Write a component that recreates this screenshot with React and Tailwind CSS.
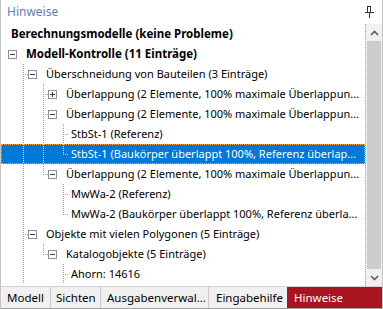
import React from "react";

const TEXT_X = { 0: 10, 1: 25, 2: 45, 3: 65, 4: 70 };

const UL = "Überlappung (2 Elemente, 100% maximale Überlappun...";

const rows = [
  { lv: 0, t: "Berechnungsmodelle (keine Probleme)", b: true, g: [] },
  { lv: 1, exp: "-", t: "Modell-Kontrolle (11 Einträge)", b: true, g: [] },
  { lv: 2, exp: "-", t: "Überschneidung von Bauteilen (3 Einträge)", g: ["T"] },
  { lv: 3, exp: "+", t: UL, g: ["I", "T"] },
  { lv: 3, exp: "-", t: UL, g: ["I", "T"] },
  { lv: 4, t: "StbSt-1 (Referenz)", g: ["I", "I", "T"] },
  { lv: 4, t: "StbSt-1 (Baukörper überlappt 100%, Referenz überlap...", g: ["I", "I", "L"], sel: true },
  { lv: 3, exp: "-", t: UL, g: ["I", "L"] },
  { lv: 4, t: "MwWa-2 (Referenz)", g: ["I", " ", "T"] },
  { lv: 4, t: "MwWa-2 (Baukörper überlappt 100%, Referenz überla...", g: ["I", " ", "L"] },
  { lv: 2, exp: "-", t: "Objekte mit vielen Polygonen (5 Einträge)", g: ["T"] },
  { lv: 3, exp: "-", t: "Katalogobjekte (5 Einträge)", g: ["I", "L"] },
  { lv: 4, t: "Ahorn: 14616", g: ["I", " ", "T"] },
];

function Guides({ row }) {
  const w = TEXT_X[row.lv];
  const dot = row.sel ? "#ffffff" : "#a0a0a0";
  const els = [];
  row.g.forEach((kind, i) => {
    const x = 22 + 20 * i + 0.5;
    if (kind === "I" || kind === "T") {
      els.push(<line key={"v" + i} x1={x} y1={0} x2={x} y2={20} stroke={dot} strokeDasharray="1 1" />);
    } else if (kind === "L") {
      els.push(<line key={"v" + i} x1={x} y1={0} x2={x} y2={11} stroke={dot} strokeDasharray="1 1" />);
    }
    if (i === row.g.length - 1 && kind !== " ") {
      const end = row.exp ? 22 + 20 * i + 5 : w - 2;
      els.push(<line key={"h" + i} x1={x - 0.5} y1={10.5} x2={end} y2={10.5} stroke={dot} strokeDasharray="1 1" />);
    }
  });
  if (row.exp) {
    const bx = row.lv === 1 ? 7 : 22 + 20 * (row.lv - 2) + 5;
    els.push(
      <rect key="box" x={bx + 0.5} y={6.5} width={8} height={8} fill="#ffffff" stroke="#919191" />
    );
    els.push(<line key="m" x1={bx + 2} y1={10.5} x2={bx + 7} y2={10.5} stroke="#3c3c3c" />);
    if (row.exp === "+") {
      els.push(<line key="p" x1={bx + 4.5} y1={8} x2={bx + 4.5} y2={13} stroke="#3c3c3c" />);
    }
  }
  return (
    <svg width={w} height={20} className="shrink-0 block" shapeRendering="crispEdges">
      {els}
    </svg>
  );
}

function Row({ row }) {
  return (
    <div
      className={
        "flex items-center h-[20px] whitespace-nowrap overflow-hidden " +
        (row.sel ? "bg-[#0078d7] text-white outline outline-1 outline-dotted outline-[#f5a442] -outline-offset-1" : "text-black")
      }
    >
      <Guides row={row} />
      <span className={"leading-[20px] " + (row.b ? "font-bold text-[11.5px]" : "text-[11px]")}>{row.t}</span>
    </div>
  );
}

export default function App() {
  return (
    <div
      className="w-[383px] h-[309px] bg-white flex flex-col border-l border-r border-[#c4c4c4] text-[11px] overflow-hidden"
      style={{ fontFamily: '"Noto Sans", "Open Sans", sans-serif' }}
    >
      {/* title */}
      <div className="h-[24px] flex items-center justify-between pl-[6px] pr-[8px] shrink-0">
        <span className="text-[12px] text-[#6080b4] leading-none">Hinweise</span>
        <svg width="9" height="12" viewBox="0 0 9 12" shapeRendering="crispEdges">
          <rect x="2.5" y="0.5" width="3" height="6" fill="none" stroke="#333" />
          <line x1="0" y1="6.5" x2="9" y2="6.5" stroke="#333" />
          <line x1="4.5" y1="7" x2="4.5" y2="12" stroke="#333" />
        </svg>
      </div>
      {/* body */}
      <div className="flex h-[262px] shrink-0">
        <div className="flex-1 flex flex-col overflow-hidden">
          {rows.map((r, i) => (
            <Row key={i} row={r} />
          ))}
        </div>
        <div className="w-[17px] shrink-0 border-l border-dotted border-[#a0a0a0] bg-[#f0f0f0] flex flex-col">
          <div className="h-[17px] flex items-center justify-center">
            <svg width="9" height="6" viewBox="0 0 9 6">
              <path d="M1 5 L4.5 1.5 L8 5" fill="none" stroke="#606060" strokeWidth="1.6" />
            </svg>
          </div>
          <div className="flex-1 bg-[#cdcdcd] mx-[1px]" />
          <div className="h-[17px] flex items-center justify-center">
            <svg width="9" height="6" viewBox="0 0 9 6">
              <path d="M1 1 L4.5 4.5 L8 1" fill="none" stroke="#606060" strokeWidth="1.6" />
            </svg>
          </div>
        </div>
      </div>
      {/* tabs */}
      <div className="flex h-[23px] shrink-0 border-t border-[#d4d4d4] border-b border-b-[#a0a0a0] bg-[#f0f0f0] text-black text-[11.5px]">
        <div className="w-[50px] pl-[6px] flex items-center border-r border-[#c8c8c8]">Modell</div>
        <div className="w-[50px] pl-[5px] flex items-center border-r border-[#c8c8c8]">Sichten</div>
        <div className="w-[108px] pl-[6px] flex items-center border-r border-[#c8c8c8] whitespace-nowrap">Ausgabenverwal...</div>
        <div className="w-[78px] pl-[7px] flex items-center whitespace-nowrap">Eingabehilfe</div>
        <div className="flex-1 bg-[#a8151f] text-white pl-[7px] flex items-center">Hinweise</div>
      </div>
    </div>
  );
}
